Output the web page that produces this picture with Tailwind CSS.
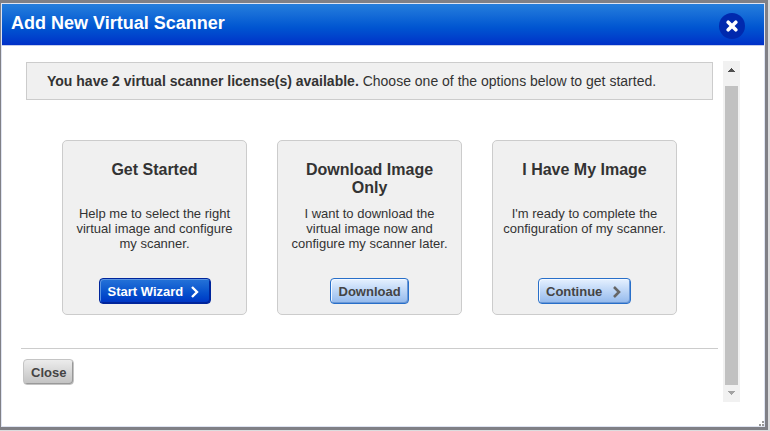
<!DOCTYPE html>
<html lang="en">
<head>
<meta charset="utf-8">
<title>Add New Virtual Scanner</title>
<script src="https://cdn.jsdelivr.net/npm/@tailwindcss/browser@4"></script>
</head>
<body class="h-[431px] w-[770px] overflow-hidden bg-[#dcdcde] pr-[2px] pb-px font-['Liberation_Sans',Arial,sans-serif] text-[#333]">
<div class="h-[430px] w-[768px] bg-[#808086] pt-[3px] pr-[3px] pb-[3px] pl-px">
  <div class="relative flex h-[424px] flex-col border border-[#dfe4f2] bg-white">
    <header class="flex h-[42px] shrink-0 items-start justify-between border-b border-[#c3cdec] bg-linear-to-b from-[#267edc] to-[#002fc8] pr-[19px] pl-[9px]">
      <h1 class="pt-[7px] text-[18px] leading-[24px] font-bold whitespace-nowrap text-white">Add New Virtual Scanner</h1>
      <button aria-label="Close dialog" class="mt-[9px] flex size-[26px] items-center justify-center rounded-full bg-[#0029ae]">
        <svg width="12" height="12" viewBox="0 0 12 12" stroke="#fff" stroke-width="3.6" stroke-linecap="round"><path d="M2.2 2.2 9.8 9.8M9.8 2.2 2.2 9.8"/></svg>
      </button>
    </header>
    <div class="flex pt-[15px] pr-[24px] pl-[19px]">
      <main class="w-[697px] shrink-0">
        <div class="mt-px ml-[5px] flex h-[38px] w-[687px] items-center border border-[#ccc] bg-[#f0f0f0] pl-[20px] text-[14px] whitespace-pre"><b>You have 2 virtual scanner license(s) available.</b> Choose one of the options below to get started.</div>
        <div class="mt-[40px] ml-[41px] flex gap-[30px] text-center">
          <section class="flex h-[175px] w-[185px] flex-col items-center rounded-[5px] border border-[#ccc] bg-[#f0f0f0] pt-[20px]">
            <h2 class="h-[45px] text-[16px] leading-[18px] font-bold">Get Started</h2>
            <p class="h-[72px] text-[13px] leading-[15px] whitespace-nowrap">Help me to select the right<br>virtual image and configure<br>my scanner.</p>
            <button class="flex h-[26px] w-[112px] items-center rounded-[4px] border border-[#00259b] bg-linear-to-b from-[#2573d8] to-[#0033c4] pt-[2px] pl-[8px] text-[13px] font-bold whitespace-nowrap text-white shadow-[inset_1px_1px_0_#5b94e2,inset_-1px_-1px_0_#00259b]">Start Wizard<svg class="mb-px ml-[8px]" width="8" height="12" viewBox="0 0 8 12" fill="none" stroke="#fff" stroke-width="2.4"><path d="M1 1 6 6 1 11"/></svg></button>
          </section>
          <section class="flex h-[175px] w-[185px] flex-col items-center rounded-[5px] border border-[#ccc] bg-[#f0f0f0] pt-[20px]">
            <h2 class="h-[45px] text-[16px] leading-[18px] font-bold">Download Image<br>Only</h2>
            <p class="h-[72px] text-[13px] leading-[15px] whitespace-nowrap">I want to download the<br>virtual image now and<br>configure my scanner later.</p>
            <button class="flex h-[26px] w-[79px] items-center rounded-[4px] border border-[#286fc9] bg-linear-to-b from-[#e6f1ff] to-[#93b9ec] pt-[2px] pl-[7.5px] text-[13px] font-bold text-[#444] shadow-[inset_1px_1px_0_#f3f8ff,inset_-1px_-1px_0_#6b98d6]">Download</button>
          </section>
          <section class="flex h-[175px] w-[185px] flex-col items-center rounded-[5px] border border-[#ccc] bg-[#f0f0f0] pt-[20px]">
            <h2 class="h-[45px] text-[16px] leading-[18px] font-bold">I Have My Image</h2>
            <p class="h-[72px] text-[13px] leading-[15px] whitespace-nowrap">I'm ready to complete the<br>configuration of my scanner.</p>
            <button class="flex h-[26px] w-[93px] items-center rounded-[4px] border border-[#286fc9] bg-linear-to-b from-[#e6f1ff] to-[#93b9ec] pt-[2px] pl-[7px] text-[13px] font-bold text-[#444] shadow-[inset_1px_1px_0_#f3f8ff,inset_-1px_-1px_0_#6b98d6]">Continue<svg class="mb-px ml-[11px]" width="8" height="12" viewBox="0 0 8 12" fill="none" stroke="#666" stroke-width="2.6"><path d="M1 1 6 6 1 11"/></svg></button>
          </section>
        </div>
        <div class="mt-[33px] border-t border-[#ccc] pt-[10px] pl-[2px]">
          <button class="flex h-[26px] w-[51px] items-center rounded-[4px] border border-[#c4c4c4] bg-linear-to-b from-[#ececec] to-[#c2c2c2] pt-[2px] pl-[7px] text-[13px] font-bold text-[#444] shadow-[inset_-1px_-1px_0_#999]">Close</button>
        </div>
      </main>
      <div class="ml-[5px] flex h-[341px] w-[17px] shrink-0 flex-col items-center bg-[#f1f1f1]">
        <svg class="shrink-0" width="17" height="25" viewBox="0 0 17 25" shape-rendering="crispEdges"><path fill="#505050" d="M8 7h1v1h1v1h1v1h1v1H5v-1h1V9h1V8h1z"/></svg>
        <div class="h-[299px] w-[13px] shrink-0 bg-[#c1c1c1]"></div>
        <svg class="shrink-0" width="17" height="17" viewBox="0 0 17 17" shape-rendering="crispEdges"><path fill="#a3a3a3" d="M5 6h7v1h-1v1h-1v1H9v1H8V9H7V8H6V7H5z"/></svg>
      </div>
    </div>
    <svg class="absolute right-0 bottom-0" width="5" height="5" viewBox="0 0 5 5" fill="#999" shape-rendering="crispEdges"><path d="M0 3h2v2H0zM3 3h2v2H3zM3 0h2v2H3z"/></svg>
  </div>
</div>
</body>
</html>
